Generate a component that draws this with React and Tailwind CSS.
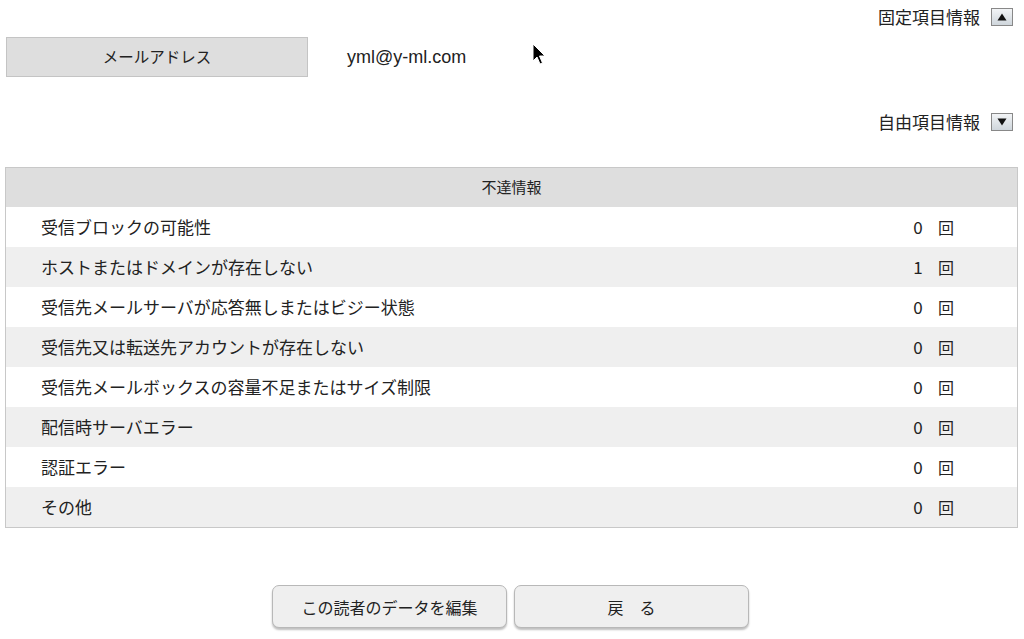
import React from "react";

const rows = [
  ["受信ブロックの可能性", 0],
  ["ホストまたはドメインが存在しない", 1],
  ["受信先メールサーバが応答無しまたはビジー状態", 0],
  ["受信先又は転送先アカウントが存在しない", 0],
  ["受信先メールボックスの容量不足またはサイズ制限", 0],
  ["配信時サーバエラー", 0],
  ["認証エラー", 0],
  ["その他", 0],
];

function Toggle({ label, up }) {
  return (
    <div className="flex items-center justify-end gap-[11px] pr-[6px] h-[22px]">
      <span className="text-[17px] text-[#222]">{label}</span>
      <span className="flex h-[18px] w-[22px] items-center justify-center border border-[#888] bg-gradient-to-b from-[#f2f4f6] to-[#cfd6dc]">
        <svg width="10" height="8" viewBox="0 0 10 8">
          {up ? <path d="M5 0.5 L9.5 7.5 L0.5 7.5 Z" fill="#111" /> : <path d="M0.5 0.5 L9.5 0.5 L5 7.5 Z" fill="#111" />}
        </svg>
      </span>
    </div>
  );
}

export default function App() {
  return (
    <div
      className="relative h-[639px] w-[1024px] overflow-hidden bg-white text-[#222]"
      style={{ fontFamily: '"Noto Sans CJK JP", "Liberation Sans", sans-serif' }}
    >
      <div className="px-[5px] pt-[6px]">
        <Toggle label="固定項目情報" up />

        <div className="mt-[9px] flex items-center">
          <div className="ml-[1px] flex h-[40px] w-[302px] items-center justify-center border border-[#c4c4c4] bg-[#dedede] text-[15.5px]">
            メールアドレス
          </div>
          <div className="ml-[39px] text-[18px]" style={{ fontFamily: '"Liberation Sans", sans-serif' }}>
            yml@y-ml.com
          </div>
        </div>

        <div className="mt-[34px]">
          <Toggle label="自由項目情報" />
        </div>

        <div className="mt-[34px] w-[1013px] border border-[#c8c8c8]">
          <div className="flex h-[39px] items-center justify-center bg-[#dedede] text-[15px]">
            不達情報
          </div>
          {rows.map(([label, n], i) => (
            <div
              key={label}
              className={`flex h-[40px] items-center pl-[35px] pr-[63px] text-[17px] ${i % 2 === 0 ? "bg-white" : "bg-[#efefef]"}`}
            >
              <span className="flex-1">{label}</span>
              <span className="w-[12px] text-center text-[17px]">{n}</span>
              <span className="ml-[14px] text-[16px]">回</span>
            </div>
          ))}
        </div>

        <div className="mt-[57px] flex justify-center gap-[7px] pr-[3px]">
          <button className="h-[43px] w-[235px] rounded-[7px] border border-[#b8b8b8] bg-[#efefef] text-[16px] shadow-[0_2px_2px_rgba(0,0,0,0.25)]">
            この読者のデータを編集
          </button>
          <button className="h-[43px] w-[235px] rounded-[7px] border border-[#b8b8b8] bg-[#efefef] text-[16px] shadow-[0_2px_2px_rgba(0,0,0,0.25)]">
            戻　る
          </button>
        </div>
      </div>

      <svg className="absolute left-[532px] top-[43px]" width="16" height="24" viewBox="0 0 16 24">
        <path d="M1 1 L1 18 L5 14 L8 21 L10.5 20 L7.5 13 L13 13 Z" fill="#000" stroke="#fff" strokeWidth="1" />
      </svg>
    </div>
  );
}
